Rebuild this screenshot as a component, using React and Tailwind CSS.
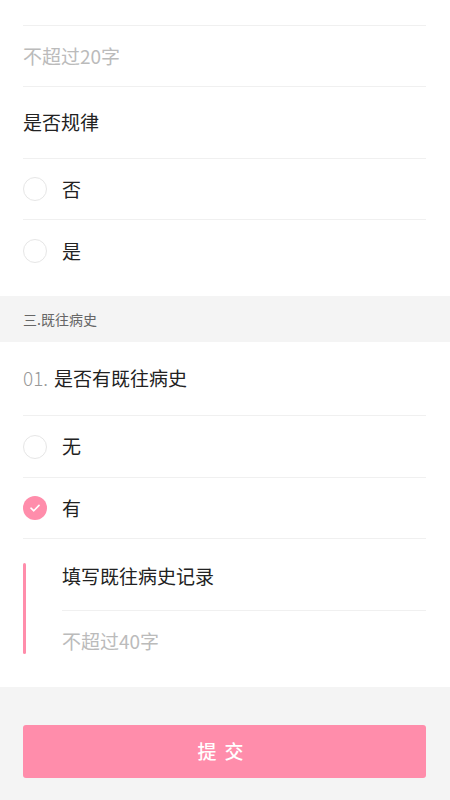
import React, { useState } from 'react';

const font = { fontFamily: '"Noto Sans CJK SC", "Noto Sans", sans-serif' };

const Radio = ({ checked }) =>
    checked ? (
        <span className="w-6 h-6 rounded-full bg-[#ff8dab] flex items-center justify-center shrink-0">
            <svg width="12" height="12" viewBox="0 0 12 12" fill="none">
                <path d="M2 6.2 L4.8 8.8 L10 3.4" stroke="#fff" strokeWidth="1.6" strokeLinecap="round" strokeLinejoin="round" />
            </svg>
        </span>
    ) : (
        <span className="w-6 h-6 rounded-full border border-[#e6e6e6] shrink-0" />
    );

const OptionRow = ({ label, checked, onClick, last, tall, h = 'h-[61px]' }) => (
    <div
        onClick={onClick}
        className={`flex items-center gap-[15px] ${tall ? 'h-[76px] pb-[14px]' : h} ${last ? '' : 'border-b border-[#f0f0f0]'}`}
    >
        <Radio checked={checked} />
        <span className="text-[19px] text-[#222]">{label}</span>
    </div>
);

export default function App() {
    const [regular, setRegular] = useState(null);
    const [history, setHistory] = useState('有');

    return (
        <div className="w-[450px] h-[800px] overflow-hidden bg-[#f4f4f4]" style={font}>
            {/* top section */}
            <div className="bg-white pl-[23px] pr-[24px]">
                <div className="h-[26px] border-b border-[#f0f0f0]" />
                <div className="h-[61px] flex items-center border-b border-[#f0f0f0] text-[19px] text-[#bbb]">
                    不超过20字
                </div>
                <div className="h-[72px] flex items-center border-b border-[#f0f0f0] text-[19px] text-[#222]">
                    是否规律
                </div>
                <OptionRow label="否" checked={regular === '否'} onClick={() => setRegular('否')} />
                <OptionRow label="是" checked={regular === '是'} onClick={() => setRegular('是')} last tall />
            </div>

            {/* section header */}
            <div className="h-[46px] px-[23px] flex items-center text-[14px] text-[#666]">三.既往病史</div>

            {/* past history */}
            <div className="bg-white pl-[23px] pr-[24px] pb-[33px]">
                <div className="h-[74px] flex items-center border-b border-[#f0f0f0] text-[19px]">
                    <span className="text-[#999] font-light mr-[6px]">01.</span>
                    <span className="text-[#222]">是否有既往病史</span>
                </div>
                <OptionRow label="无" h="h-[62px]" checked={history === '无'} onClick={() => setHistory('无')} />
                <OptionRow label="有" checked={history === '有'} onClick={() => setHistory('有')} />

                <div className="mt-[24px] flex">
                    <div className="w-[3px] h-[91px] rounded-full bg-[#ff8dab]" />
                    <div className="flex-1 ml-[36px]">
                        <div className="h-[48px] flex items-center pb-[20px] border-b border-[#f0f0f0] text-[19px] text-[#222]">
                            填写既往病史记录
                        </div>
                        <div className="h-[43px] flex items-end text-[19px] text-[#bbb] leading-none pb-[4px]">不超过40字</div>
                    </div>
                </div>
            </div>

            {/* submit */}
            <div className="pl-[23px] pr-[24px] pt-[38px]">
                <button className="w-full h-[53px] rounded-[3px] bg-[#ff8dab] text-white text-[19px] font-medium tracking-[8px] flex items-center justify-center">
                    提交
                </button>
            </div>
        </div>
    );
}
